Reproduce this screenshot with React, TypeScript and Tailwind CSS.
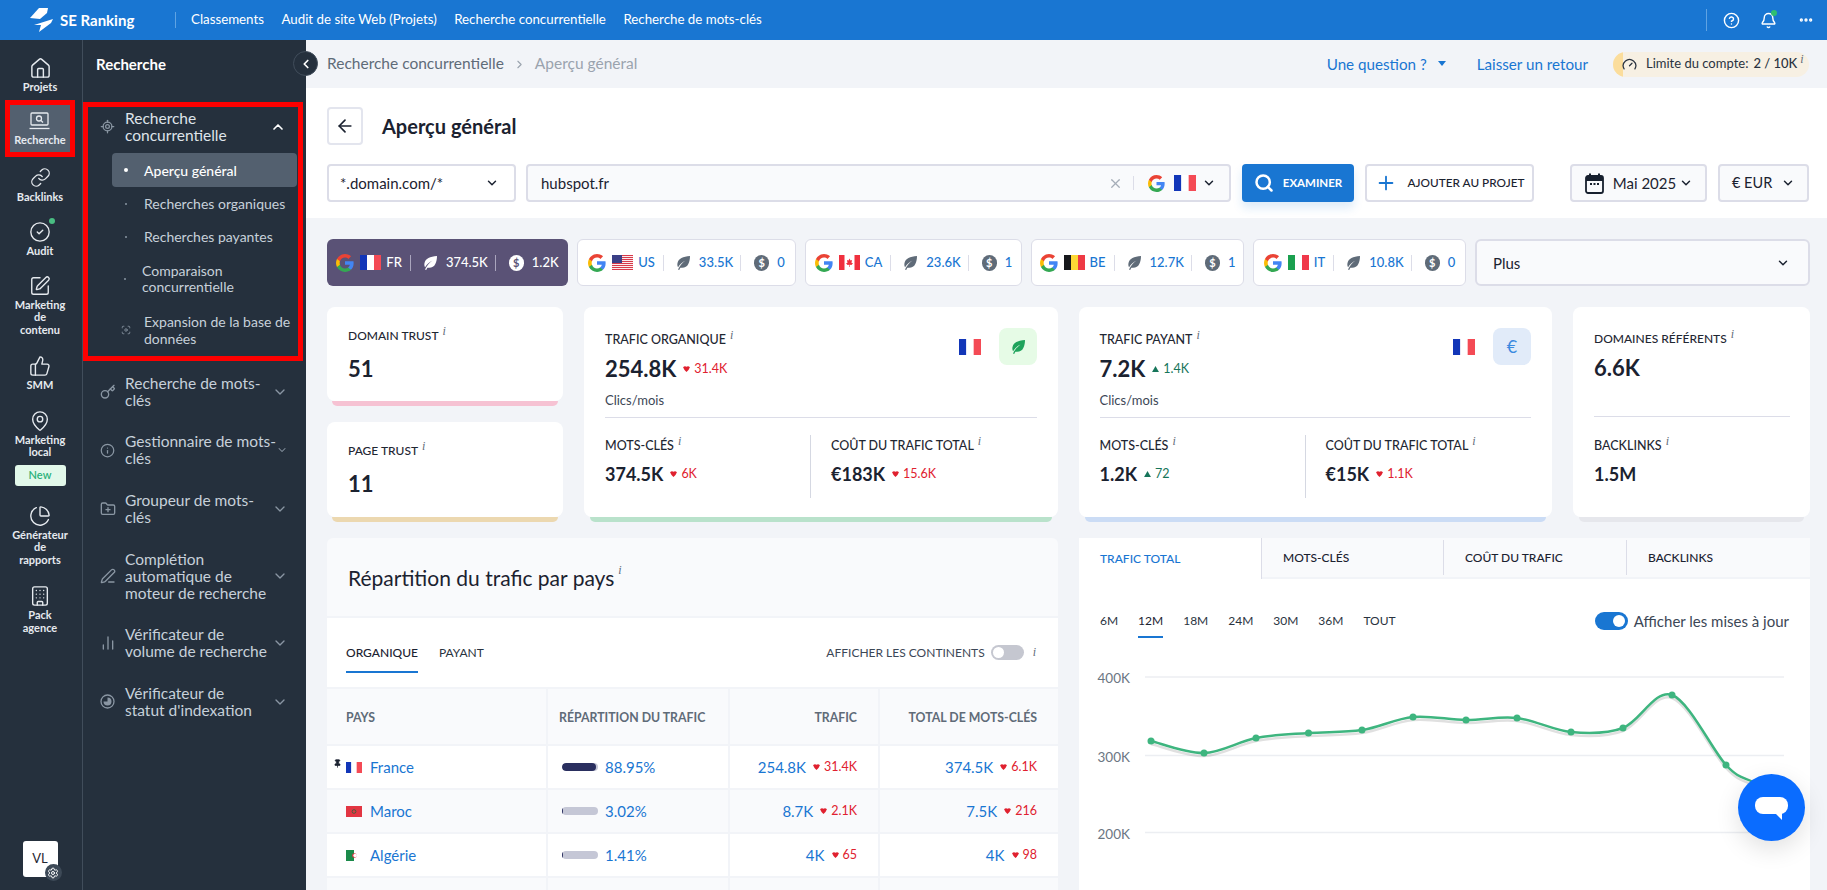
import React from "react";
import {
  Home, Link, CircleCheck, SquarePen, ThumbsUp, MapPin, ChartPie, Building, Settings,
  ChevronDown, ChevronUp, ChevronLeft, ChevronRight, ArrowLeft, Search, Plus, X, CircleHelp, Bell, Ellipsis,
  LocateFixed, Key, CircleAlert, FolderPlus, PenLine, ChartNoAxesColumn, Gauge, Pin, Focus,
} from "lucide-react";

const GoogleG = ({ size = 18 }: { size?: number }) => (
  <svg width={size} height={size} viewBox="1 1 22 22" className="shrink-0">
    <path fill="#4285F4" d="M22.56 12.25c0-.78-.07-1.53-.2-2.25H12v4.26h5.92c-.26 1.37-1.04 2.53-2.21 3.31v2.77h3.57c2.08-1.92 3.28-4.74 3.28-8.09z" />
    <path fill="#34A853" d="M12 23c2.97 0 5.46-.98 7.28-2.66l-3.57-2.77c-.98.66-2.23 1.06-3.71 1.06-2.86 0-5.29-1.93-6.16-4.53H2.18v2.84C3.99 20.53 7.7 23 12 23z" />
    <path fill="#FBBC05" d="M5.84 14.09c-.22-.66-.35-1.36-.35-2.09s.13-1.43.35-2.09V7.07H2.18C1.43 8.55 1 10.22 1 12s.43 3.45 1.18 4.93l2.85-2.22.81-.62z" />
    <path fill="#EA4335" d="M12 5.38c1.62 0 3.06.56 4.21 1.64l3.15-3.15C17.45 2.09 14.97 1 12 1 7.7 1 3.99 3.47 2.18 7.07l3.66 2.84c.87-2.6 3.3-4.53 6.16-4.53z" />
  </svg>
);

const Flag = ({ code, w = 21, h = 15 }: { code: string; w?: number; h?: number }) => (
  <svg width={w} height={h} viewBox="0 0 21 15" preserveAspectRatio="none" className="shrink-0">
    {code === "FR" && (
      <>
        <rect width="7" height="15" fill="#1236b8" />
        <rect x="7" width="7" height="15" fill="#fff" />
        <rect x="14" width="7" height="15" fill="#f44a55" />
      </>
    )}
    {code === "US" && (
      <>
        <rect width="21" height="15" fill="#fff" />
        {[0, 2, 4, 6, 8, 10, 12, 14].map((y) => (
          <rect key={y} y={y} width="21" height="1.1" fill="#d8394a" />
        ))}
        <rect width="10" height="8" fill="#3a3f86" />
      </>
    )}
    {code === "CA" && (
      <>
        <rect width="21" height="15" fill="#fff" />
        <rect width="5.5" height="15" fill="#f0303e" />
        <rect x="15.5" width="5.5" height="15" fill="#f0303e" />
        <path d="M10.5 3.5l1 2 1.5-.5-.5 3 1.5 0-1.5 2-1.7-.3V12h-.6V9.7L8.5 10 7 8h1.500l-.5-3 1.500.5z" fill="#f0303e" />
      </>
    )}
    {code === "BE" && (
      <>
        <rect width="7" height="15" fill="#17181c" />
        <rect x="7" width="7" height="15" fill="#fdd835" />
        <rect x="14" width="7" height="15" fill="#ee3a44" />
      </>
    )}
    {code === "IT" && (
      <>
        <rect width="7" height="15" fill="#1aa04f" />
        <rect x="7" width="7" height="15" fill="#fff" />
        <rect x="14" width="7" height="15" fill="#f0384a" />
      </>
    )}
    {code === "MA" && (
      <>
        <rect width="21" height="15" fill="#e23542" />
        <circle cx="10.5" cy="7.500" r="2.500" fill="none" stroke="#1c6a3a" strokeWidth="1" />
      </>
    )}
    {code === "DZ" && (
      <>
        <rect width="10.500" height="15" fill="#1b8a4a" />
        <rect x="10.500" width="10.500" height="15" fill="#fff" />
        <circle cx="11" cy="7.500" r="3" fill="#e23542" />
        <circle cx="12" cy="7.500" r="2.400" fill="#fff" />
      </>
    )}
  </svg>
);

const Leaf = ({ className = "", size = 16 }: { className?: string; size?: number }) => (
  <svg width={size} height={size} viewBox="0 0 16 16" className={className}>
    <path fill="currentColor" d="M15 1C8 1.500 3.500 3.500 2.500 8c-.4 1.800 0 3.300.6 4.300C5 9 7.500 6.800 10.500 5.500 7.800 7.500 5.200 10 3 14.500l1.200.5c.4-.9.8-1.700 1.200-2.300 3.600.6 6.500-.6 7.900-3.600C14.500 6.500 15 4 15 1z" />
  </svg>
);

const Coin = ({ dark = false }: { dark?: boolean }) => (
  <span className={`flex h-[16px] w-[15px] shrink-0 items-center justify-center rounded-full text-[11px] font-bold leading-none ${dark ? "bg-white text-[#5a5276]" : "bg-[#5f6b78] text-white"}`}>$</span>
);

const Info = ({ className = "" }: { className?: string }) => (
  <span className={`relative -top-[5px] ml-[4px] font-['Liberation_Serif',serif] text-[12px] italic text-[#5f6b78] ${className}`}>i</span>
);

const Delta = ({ v, up = false }: { v: string; up?: boolean }) => (
  <span className={`ml-[7px] inline-flex items-center gap-[4px] text-[12.5px] font-normal ${up ? "text-[#16755a]" : "text-[#e0212f]"}`}>
    <svg width="7" height="6" viewBox="0 0 8 7">
      {up ? <path d="M4 0l4 7H0z" fill="currentColor" /> : <path d="M0 1.500Q2 -.5 4 1Q6 -.5 8 1.500Q7 4.500 4 7Q1 4.500 0 1.500z" fill="currentColor" />}
    </svg>
    {v}
  </span>
);

function RailItem({ icon, label, dot }: { icon: React.ReactNode; label: string[]; dot?: boolean }) {
  return (
    <div className="relative flex flex-col items-center text-[11px] font-bold leading-[12.5px] text-[#e6eaef]">
      <span className="relative mb-[2px] flex h-[22px] items-center justify-center">
        {icon}
        {dot && <span className="absolute -right-[4px] top-[-3px] h-[6px] w-[6px] rounded-full bg-[#49bd82]" />}
      </span>
      {label.map((l) => (
        <span key={l}>{l}</span>
      ))}
    </div>
  );
}

function NavGroup({ icon, lines, h }: { icon: React.ReactNode; lines: string[]; h: number }) {
  return (
    <div className="flex items-center pl-[17px] pr-[18px] text-[#c7d0da]" style={{ height: h }}>
      <span className="flex w-[25px] shrink-0 text-[#8a96a3]">{icon}</span>
      <span className="flex-1 whitespace-nowrap text-[15.5px] leading-[17px]">
        {lines.map((l) => (
          <div key={l}>{l}</div>
        ))}
      </span>
      <ChevronDown size={16} className="text-[#8a96a3]" />
    </div>
  );
}

const topLinks = ["Classements", "Audit de site Web (Projets)", "Recherche concurrentielle", "Recherche de mots-clés"];

const chips = [
  { g: "FR", a: "374.5K", b: "1.2K", w: "w-[241px]", active: true },
  { g: "US", a: "33.5K", b: "0", w: "w-[219px]" },
  { g: "CA", a: "23.6K", b: "1", w: "w-[217px]" },
  { g: "BE", a: "12.7K", b: "1", w: "w-[213px]" },
  { g: "IT", a: "10.8K", b: "0", w: "w-[213px]" },
];

const rows = [
  { flag: "FR", name: "France", pct: "88.95%", fill: "w-[94%]", t: "254.8K", td: "31.4K", k: "374.5K", kd: "6.1K", pin: true },
  { flag: "MA", name: "Maroc", pct: "3.02%", fill: "w-[4%]", t: "8.7K", td: "2.1K", k: "7.5K", kd: "216" },
  { flag: "DZ", name: "Algérie", pct: "1.41%", fill: "w-[3%]", t: "4K", td: "65", k: "4K", kd: "98" },
];

// x is from the left of the chart panel, y from the top of the svg
const points: [number, number][] = [
  [72, 102], [125, 114], [177, 99], [229.5, 94], [283, 91], [334, 78], [387, 81], [438, 79],
  [492, 93], [544, 89], [593, 56], [647, 126], [674, 143], [699, 156],
];

function smoothPath(p: [number, number][]) {
  let d = `M${p[0][0]} ${p[0][1]}`;
  for (let i = 0; i < p.length - 1; i++) {
    const p0 = p[i - 1] || p[i];
    const p1 = p[i];
    const p2 = p[i + 1];
    const p3 = p[i + 2] || p2;
    const c1x = p1[0] + (p2[0] - p0[0]) / 6;
    const c1y = p1[1] + (p2[1] - p0[1]) / 6;
    const c2x = p2[0] - (p3[0] - p1[0]) / 6;
    const c2y = p2[1] - (p3[1] - p1[1]) / 6;
    d += ` C${c1x} ${c1y} ${c2x} ${c2y} ${p2[0]} ${p2[1]}`;
  }
  return d;
}

function SubMetric({ title, value, delta, up }: { title: string; value: string; delta?: string; up?: boolean }) {
  return (
    <div>
      <div className="text-[12.5px] font-medium leading-[16px] text-[#1f2733]">{title}<Info /></div>
      <div className="mt-[8px] flex items-center text-[18px] font-bold leading-[24px] text-[#1b2230]">
        {value}
        {delta && <Delta v={delta} up={up} />}
      </div>
    </div>
  );
}

function TrafficCard({ title, value, delta, up, badge, strip, kw, kwd, kwUp, cost, costd }: any) {
  return (
    <div className="flex-1">
      <div className="relative h-[210px] rounded-[8px] bg-white px-[21px] pt-[25px]">
        <div className="flex justify-between">
          <div>
            <div className="text-[12.5px] font-medium leading-[16px] text-[#1f2733]">{title}<Info /></div>
            <div className="mt-[6px] flex items-center text-[22px] font-bold leading-[30px] text-[#1b2230]">
              {value}
              <Delta v={delta} up={up} />
            </div>
            <div className="mt-[8px] text-[13px] leading-[16px] text-[#3c4756]">Clics/mois</div>
          </div>
          <div className="-mt-[4px] flex items-start gap-[18px]">
            <span className="mt-[11px]"><Flag code="FR" w={22} h={16} /></span>
            {badge}
          </div>
        </div>
        <div className="mt-[9px] h-px bg-[#dcdde8]" />
        <div className="mt-[17px] flex h-[63px]">
          <div className="w-[206px] border-r border-[#d5d8e2] pt-[3px]">
            <SubMetric title="MOTS-CLÉS" value={kw} delta={kwd} up={kwUp} />
          </div>
          <div className="pl-[20px] pt-[3px]">
            <SubMetric title="COÛT DU TRAFIC TOTAL" value={cost} delta={costd} />
          </div>
        </div>
      </div>
      <div className={`mx-[6px] h-[5px] rounded-b-[5px] ${strip}`} />
    </div>
  );
}

function TrustCard({ title, value, strip, h }: { title: string; value: string; strip: string; h: string }) {
  return (
    <div>
      <div className={`rounded-[8px] bg-white pl-[21px] pt-[21px] ${h}`}>
        <div className="text-[12px] font-medium leading-[16px] text-[#1f2733]">{title}<Info /></div>
        <div className="mt-[11px] text-[22px] font-bold leading-[28px] text-[#1b2230]">{value}</div>
      </div>
      <div className={`mx-[5px] h-[5px] rounded-b-[5px] ${strip}`} />
    </div>
  );
}

export default function App() {
  return (
    <div className="flex h-[890px] w-full flex-col overflow-hidden bg-[#f2f4f8] [font-family:Lato,sans-serif]">
      {/* TOP BAR */}
      <header className="flex h-[40px] shrink-0 items-center bg-[#1976d2] text-white">
        <div className="flex w-[175px] items-center pl-[30px]">
          <svg width="23" height="24" viewBox="0 0 23 24" className="shrink-0">
            <path fill="#fff" d="M9 0h9l-1 5-7 6-10-1z" />
            <path fill="#fff" d="M23 11L4 17h7l-2 7 12-9z" />
          </svg>
          <span className="ml-[7px] text-[15px] font-bold">SE Ranking</span>
        </div>
        <div className="h-[16px] w-px bg-[#5fa3e3]" />
        <nav className="ml-[15px] flex gap-[17.5px] text-[13.3px]">
          {topLinks.map((l) => (
            <span key={l}>{l}</span>
          ))}
        </nav>
        <div className="ml-auto flex items-center pr-[13px]">
          <div className="mr-[16px] h-[22px] w-px bg-[#5fa3e3]" />
          <CircleHelp size={17} className="mr-[20px]" />
          <span className="relative mr-[21px]">
            <Bell size={17} />
            <span className="absolute right-[0px] top-[-2px] h-[6px] w-[6px] rounded-full bg-[#2fbf71]" />
          </span>
          <Ellipsis size={16} strokeWidth={3} />
        </div>
      </header>

      <div className="flex min-h-0 flex-1">
        {/* ICON RAIL */}
        <aside className="flex w-[83px] shrink-0 flex-col items-center border-r border-[#414d5b] bg-[#25303d] pr-[2px] pt-[17px]">
          <RailItem icon={<Home size={23} strokeWidth={1.5} />} label={["Projets"]} />
          <div className="mt-[6px] flex h-[57px] w-[70px] shrink-0 items-center justify-center border-[5px] border-[#fe0000] bg-[#53606f]">
            <RailItem
              label={["Recherche"]}
              icon={
                <svg width="21" height="20" viewBox="0 0 21 20" fill="none" stroke="currentColor" strokeWidth="1.300">
                  <rect x="2" y="2" width="17" height="12" rx="1" />
                  <path d="M.5 17.500h20" />
                  <circle cx="10" cy="7.500" r="2.500" />
                  <path d="M12 9.500l2 2" />
                </svg>
              }
            />
          </div>
          <div className="mt-[10px]"><RailItem icon={<Link size={21} strokeWidth={1.5} />} label={["Backlinks"]} /></div>
          <div className="mt-[18px]"><RailItem dot icon={<CircleCheck size={22} strokeWidth={1.5} />} label={["Audit"]} /></div>
          <div className="mt-[17px]"><RailItem icon={<SquarePen size={22} strokeWidth={1.5} />} label={["Marketing", "de", "contenu"]} /></div>
          <div className="mt-[19px]"><RailItem icon={<ThumbsUp size={22} strokeWidth={1.5} />} label={["SMM"]} /></div>
          <div className="mt-[18px]"><RailItem icon={<MapPin size={22} strokeWidth={1.5} />} label={["Marketing", "local"]} /></div>
          <span className="mt-[6px] flex h-[21px] w-[51px] shrink-0 items-center justify-center rounded-[3px] bg-[#e2f8ea] text-[11px] font-semibold text-[#2cb27a]">New</span>
          <div className="mt-[19px]"><RailItem icon={<ChartPie size={22} strokeWidth={1.5} />} label={["Générateur", "de", "rapports"]} /></div>
          <div className="mt-[19px]"><RailItem icon={<Building size={22} strokeWidth={1.5} />} label={["Pack", "agence"]} /></div>
          <div className="relative mt-auto mb-[13px] flex h-[36px] w-[35px] shrink-0 items-center justify-center rounded-[3px] bg-white text-[13px] text-[#1f2733]">
            VL
            <span className="absolute -bottom-[4px] -right-[4px] flex h-[17px] w-[17px] items-center justify-center rounded-full bg-[#3d4957] text-white">
              <Settings size={12} />
            </span>
          </div>
        </aside>

        {/* SECOND PANEL */}
        <aside className="relative w-[223px] shrink-0 bg-[#25303d]">
          <div className="flex h-[46px] items-center pl-[13px] pt-[2px] text-[15px] font-bold text-white">Recherche</div>
          <span className="absolute -right-[12px] top-[11px] z-10 flex h-[25px] w-[25px] items-center justify-center rounded-full border border-[#414d5b] bg-[#25303d] text-white">
            <ChevronLeft size={14} strokeWidth={3} />
          </span>
          <div className="ml-[0px] mr-[3px] mt-[16px] h-[259px] border-[5px] border-[#fe0000]">
            <div className="flex h-[39px] items-center pl-[12px] pr-[12px] text-[#dfe4ea]">
              <LocateFixed size={15} className="mr-[10px] shrink-0 text-[#8a96a3]" />
              <span className="flex-1 text-[15.5px] leading-[17px]">Recherche<br />concurrentielle</span>
              <ChevronUp size={16} strokeWidth={2.500} className="text-white" />
            </div>
            <div className="ml-[24px] mr-[1px] mt-[7px] flex h-[34px] items-center rounded-[4px] bg-[#53606f] text-[14px] font-medium text-white">
              <span className="ml-[12px] mr-[16px] h-[4px] w-[4px] rounded-full bg-white" />
              Aperçu général
            </div>
            {["Recherches organiques", "Recherches payantes"].map((t) => (
              <div key={t} className="ml-[24px] flex h-[33px] items-center text-[14px] text-[#c7d0da]">
                <span className="ml-[13px] mr-[17px] h-[2px] w-[2px] rounded-full bg-[#8a96a3]" />
                {t}
              </div>
            ))}
            <div className="ml-[24px] flex h-[52px] items-center text-[14px] leading-[16px] text-[#c7d0da]">
              <span className="ml-[12px] mr-[16px] h-[2px] w-[2px] rounded-full bg-[#8a96a3]" />
              <span>Comparaison<br />concurrentielle</span>
            </div>
            <div className="ml-[24px] flex h-[49px] items-center text-[14px] leading-[17px] text-[#c7d0da]">
              <Focus size={10} className="ml-[9px] mr-[13px] shrink-0 text-[#8a96a3]" />
              <span>Expansion de la base de<br />données</span>
            </div>
          </div>
          <div className="mt-[1.5px]">
            <NavGroup h={58} icon={<Key size={16} />} lines={["Recherche de mots-", "clés"]} />
            <NavGroup h={59} icon={<CircleAlert size={15} className="rotate-180" />} lines={["Gestionnaire de mots-", "clés"]} />
            <NavGroup h={58} icon={<FolderPlus size={16} />} lines={["Groupeur de mots-", "clés"]} />
            <NavGroup h={77} icon={<PenLine size={16} />} lines={["Complétion", "automatique de", "moteur de recherche"]} />
            <NavGroup h={57} icon={<ChartNoAxesColumn size={16} />} lines={["Vérificateur de", "volume de recherche"]} />
            <NavGroup
              h={60}
              lines={["Vérificateur de", "statut d'indexation"]}
              icon={
                <svg width="15" height="15" viewBox="0 0 15 15">
                  <circle cx="7.500" cy="7.500" r="6.500" fill="none" stroke="currentColor" strokeWidth="1.300" />
                  <path d="M7.500 3.500A4 4 0 1 1 3.500 7.500H7.500z" fill="currentColor" />
                </svg>
              }
            />
          </div>
        </aside>

        {/* MAIN */}
        <main className="min-w-0 flex-1">
          <div className="flex h-[48px] items-center pl-[21px] pr-[18px] text-[15.2px]">
            <span className="text-[15.5px] text-[#5f6b78]">Recherche concurrentielle</span>
            <ChevronRight size={13} className="mx-[9px] text-[#9aa3ae]" />
            <span className="text-[15.5px] text-[#9aa3ae]">Aperçu général</span>
            <span className="ml-auto flex items-center text-[#1976d2]">
              Une question ?
              <svg width="8" height="5" viewBox="0 0 8 5" className="ml-[11px]"><path d="M0 0h8L4 5z" fill="currentColor" /></svg>
            </span>
            <span className="ml-[31px] text-[#1976d2]">Laisser un retour</span>
            <span className="relative ml-[25px] flex h-[25px] w-[196px] items-center overflow-hidden rounded-full bg-[#f7f0e3] pl-[9px] text-[13px] text-[#2a3340]">
              <span className="absolute left-0 top-0 h-full w-[10px] bg-[#fbdd9c]" />
              <Gauge size={15} className="relative mr-[9px]" />
              <span>Limite du compte:</span>
              <span className="ml-[5px] font-medium">2 / 10K</span>
              <Info className="!ml-[3px]" />
            </span>
          </div>

          <div className="h-[130px] bg-white pl-[21px] pr-[17px]">
            <div className="flex items-center pt-[19px]">
              <span className="flex h-[38px] w-[36px] items-center justify-center rounded-[4px] border-2 border-[#e3e5ee] text-[#1b2230]">
                <ArrowLeft size={20} />
              </span>
              <h1 className="ml-[19px] text-[20px] font-bold text-[#1b2230]">Aperçu général</h1>
            </div>
            <div className="mt-[19px] flex h-[38px] text-[15px]">
              <div className="flex w-[189px] items-center justify-between rounded-[4px] border-2 border-[#dcdde8] pl-[11px] pr-[15px] text-[#1b2230]">
                *.domain.com/*
                <ChevronDown size={14} strokeWidth={2.500} />
              </div>
              <div className="ml-[10px] flex w-[705px] items-center rounded-[4px] border-2 border-[#dcdde8] bg-[#f9fafc] pl-[13px] pr-[13px] text-[#1b2230]">
                hubspot.fr
                <X size={15} className="ml-auto text-[#a5adb8]" />
                <span className="ml-[10px] h-[14px] w-px bg-[#dcdde8]" />
                <span className="ml-[14px]"><GoogleG size={17} /></span>
                <span className="ml-[9px]"><Flag code="FR" w={22} h={16} /></span>
                <ChevronDown size={14} strokeWidth={2.500} className="ml-[6px]" />
              </div>
              <div className="ml-[11px] flex w-[112px] items-center justify-center gap-[9px] rounded-[4px] bg-[#1976d2] text-[11.5px] font-bold text-white shadow-[0_6px_10px_rgba(25,118,210,0.15)]">
                <Search size={20} strokeWidth={3} />
                EXAMINER
              </div>
              <div className="ml-[11px] flex w-[169px] items-center justify-center gap-[11px] rounded-[4px] border-2 border-[#dcdde8] text-[11.8px] font-medium text-[#1b2230]">
                <Plus size={22} className="text-[#1976d2]" />
                AJOUTER AU PROJET
              </div>
              <div className="ml-[36px] flex w-[137px] items-center justify-between rounded-[4px] border-2 border-[#dcdde8] bg-[#f9fafc] pl-[13px] pr-[12px] text-[#1b2230]">
                <svg width="19" height="21" viewBox="0 0 19 21" className="shrink-0">
                  <rect x="1" y="3" width="17" height="17" rx="2" fill="none" stroke="#17202e" strokeWidth="1.800" />
                  <rect x="1" y="3" width="17" height="5" fill="#17202e" />
                  <rect x="4" y="0.500" width="2" height="4" fill="#17202e" />
                  <rect x="13" y="0.500" width="2" height="4" fill="#17202e" />
                  <path d="M5 11h2M8.500 11h2M12 11h2" stroke="#17202e" strokeWidth="1.800" />
                </svg>
                <span className="ml-[6px]">Mai 2025</span>
                <ChevronDown size={14} strokeWidth={2.500} />
              </div>
              <div className="ml-[11px] flex w-[91px] items-center justify-between rounded-[4px] border-2 border-[#dcdde8] bg-[#f9fafc] pl-[12px] pr-[12px] text-[14.5px] text-[#1b2230]">
                € EUR
                <ChevronDown size={14} strokeWidth={2.500} />
              </div>
            </div>
          </div>

          <div className="pl-[21px] pr-[17px] pt-[21px]">
            {/* DATABASE CHIPS */}
            <div className="flex h-[47px] gap-[9px]">
              {chips.map((c) => (
                <div
                  key={c.g}
                  className={`flex items-center justify-center rounded-[6px] text-[13px] font-medium ${c.w} ${c.active ? "bg-[#5a5276] text-white" : "border border-[#dcdde8] bg-white text-[#1976d2]"}`}
                >
                  <GoogleG />
                  <span className="ml-[6px]"><Flag code={c.g} /></span>
                  <span className="ml-[5px]">{c.g}</span>
                  <span className={`ml-[8px] h-[16px] w-px ${c.active ? "bg-[#aaa5bd]" : "bg-[#dcdde8]"}`} />
                  <Leaf className={`ml-[11px] ${c.active ? "text-white" : "text-[#5f6b78]"}`} />
                  <span className="ml-[8px]">{c.a}</span>
                  <span className={`ml-[7px] h-[16px] w-px ${c.active ? "bg-[#aaa5bd]" : "bg-[#dcdde8]"}`} />
                  <span className="ml-[13px]"><Coin dark={c.active} /></span>
                  <span className="ml-[8px]">{c.b}</span>
                </div>
              ))}
              <div className="flex flex-1 items-center justify-between rounded-[6px] border-2 border-[#dcdde8] bg-[#f9fafc] pl-[16px] pr-[18px] pt-[1px] text-[15px] text-[#1b2230]">
                Plus
                <ChevronDown size={14} strokeWidth={2.500} />
              </div>
            </div>

            {/* METRICS */}
            <div className="mt-[21px] flex gap-[21px]">
              <div className="flex w-[236px] shrink-0 flex-col gap-[16px]">
                <TrustCard title="DOMAIN TRUST" value="51" strip="bg-[#f6c2d3]" h="h-[94px]" />
                <TrustCard title="PAGE TRUST" value="11" strip="bg-[#ecd8b0]" h="h-[95px]" />
              </div>
              <TrafficCard
                title="TRAFIC ORGANIQUE" value="254.8K" delta="31.4K" strip="bg-[#b9e2cb]"
                kw="374.5K" kwd="6K" cost="€183K" costd="15.6K"
                badge={<span className="flex h-[37px] w-[38px] items-center justify-center rounded-[8px] bg-[#e6fbe6] text-[#1fa35c]"><Leaf /></span>}
              />
              <TrafficCard
                title="TRAFIC PAYANT" value="7.2K" delta="1.4K" up strip="bg-[#cbdcf5]"
                kw="1.2K" kwd="72" kwUp cost="€15K" costd="1.1K"
                badge={<span className="flex h-[37px] w-[38px] items-center justify-center rounded-[8px] bg-[#e1ebf9] text-[18px] text-[#3c8ae0]">€</span>}
              />
              <div className="w-[237px] shrink-0">
                <div className="h-[210px] rounded-[8px] bg-white px-[21px] pt-[24px]">
                  <div className="text-[12px] font-medium leading-[16px] text-[#1f2733]">DOMAINES RÉFÉRENTS<Info /></div>
                  <div className="mt-[6px] text-[22px] font-bold leading-[30px] text-[#1b2230]">6.6K</div>
                  <div className="mr-[-1px] mt-[33px] h-px bg-[#dcdde8]" />
                  <div className="mt-[21px]"><SubMetric title="BACKLINKS" value="1.5M" /></div>
                </div>
                <div className="mx-[6px] h-[5px] rounded-b-[5px] bg-[#e6e7ec]" />
              </div>
            </div>

            {/* BOTTOM PANELS */}
            <div className="mt-[16px] flex gap-[21px]">
              <section className="w-[731px] shrink-0 overflow-hidden rounded-t-[6px] bg-[#f2f4f8]">
                <div className="flex h-[78px] items-center bg-[#f9fafc] pl-[21px] pt-[1px] text-[21px] text-[#1b2230]">
                  Répartition du trafic par pays<Info className="!top-[-8px]" />
                </div>
                <div className="mt-[2px] flex h-[69px] items-center bg-white pl-[19px] pr-[22px] text-[12px]">
                  <span className="relative font-medium text-[#1b2230]">
                    ORGANIQUE
                    <span className="absolute -bottom-[11px] left-0 h-[2px] w-full bg-[#1976d2]" />
                  </span>
                  <span className="ml-[21px] text-[#2a3340]">PAYANT</span>
                  <span className="ml-auto text-[#3c4756]">AFFICHER LES CONTINENTS</span>
                  <span className="ml-[6px] flex h-[15px] w-[33px] items-center rounded-full bg-[#c5c7d0] pl-[2px]">
                    <span className="h-[11px] w-[11px] rounded-full bg-white" />
                  </span>
                  <Info className="!top-[-1px] !ml-[9px]" />
                </div>
                <div className="mt-[2px] grid grid-cols-[219px_180px_148px_178px] gap-[2px] text-[15px]">
                  <div className="flex h-[55px] items-center bg-[#f9fafc] pl-[19px] pt-[3px] text-[12.3px] font-bold text-[#5f6b78]">PAYS</div>
                  <div className="flex h-[55px] items-center bg-[#f9fafc] pl-[11px] pt-[3px] text-[12.3px] font-bold text-[#5f6b78]">RÉPARTITION DU TRAFIC</div>
                  <div className="flex h-[55px] items-center justify-end bg-[#f9fafc] pr-[21px] pt-[3px] text-[12.3px] font-bold text-[#5f6b78]">TRAFIC</div>
                  <div className="flex h-[55px] items-center justify-end bg-[#f9fafc] pr-[21px] pt-[3px] text-[12.3px] font-bold text-[#5f6b78]">TOTAL DE MOTS-CLÉS</div>
                  {rows.map((r, i) => {
                    const bg = i % 2 ? "bg-[#f9fafc]" : "bg-white";
                    return (
                      <React.Fragment key={r.name}>
                        <div className={`relative flex h-[42px] items-center pl-[19px] text-[#1976d2] ${bg}`}>
                          {r.pin && <Pin size={9} fill="#1b2230" className="absolute left-[6px] top-[13px] text-[#1b2230]" />}
                          <Flag code={r.flag} w={16} h={11} />
                          <span className="ml-[8px]">{r.name}</span>
                        </div>
                        <div className={`flex h-[42px] items-center pl-[14px] text-[#1976d2] ${bg}`}>
                          <span className="h-[8px] w-[36px] overflow-hidden rounded-full bg-[#c5c7d6]">
                            <span className={`block h-full rounded-full bg-[#2a2f5f] ${r.fill}`} />
                          </span>
                          <span className="ml-[7px]">{r.pct}</span>
                        </div>
                        <div className={`flex h-[42px] items-center justify-end pr-[21px] text-[#1976d2] ${bg}`}>
                          {r.t}
                          <Delta v={r.td} />
                        </div>
                        <div className={`flex h-[42px] items-center justify-end pr-[21px] text-[#1976d2] ${bg}`}>
                          {r.k}
                          <Delta v={r.kd} />
                        </div>
                      </React.Fragment>
                    );
                  })}
                  <div className="h-[20px] bg-[#f9fafc]" />
                  <div className="h-[20px] bg-[#f9fafc]" />
                  <div className="h-[20px] bg-[#f9fafc]" />
                  <div className="h-[20px] bg-[#f9fafc]" />
                </div>
              </section>

              <section className="min-w-0 flex-1 bg-white">
                <div className="flex h-[41px] text-[12px] font-medium">
                  <div className="flex w-[183px] items-center border-r border-[#dcdde8] pl-[21px] text-[#1976d2]">TRAFIC TOTAL</div>
                  <div className="flex flex-1 items-center border-b-2 border-[#f2f4f8] bg-[#f9fafc] text-[#1b2230]">
                    <span className="flex h-[35px] w-[182px] items-center border-r border-[#dcdde8] pl-[21px]">MOTS-CLÉS</span>
                    <span className="flex h-[35px] w-[183px] items-center border-r border-[#dcdde8] pl-[21px]">COÛT DU TRAFIC</span>
                    <span className="pl-[21px]">BACKLINKS</span>
                  </div>
                </div>
                <div className="flex h-[60px] items-start pl-[21px] pr-[21px] pt-[33px] text-[12px] text-[#2a3340]">
                  {["6M", "12M", "18M", "24M", "30M", "36M", "TOUT"].map((m) => (
                    <span key={m} className={`relative mr-[20px] leading-[18px] ${m === "12M" ? "text-[#1b2230]" : ""}`}>
                      {m}
                      {m === "12M" && <span className="absolute -bottom-[8px] left-0 h-[2px] w-full bg-[#1976d2]" />}
                    </span>
                  ))}
                  <span className="ml-auto -mt-[2px] flex items-center text-[15px] text-[#3c4756]">
                    <span className="mr-[6px] flex h-[18px] w-[33px] items-center justify-end rounded-full bg-[#1976d2] pr-[3px]">
                      <span className="h-[12px] w-[12px] rounded-full bg-white" />
                    </span>
                    Afficher les mises à jour
                  </span>
                </div>
                <svg width="731" height="250" viewBox="0 0 731 250" className="block">
                  {[{ y: 38, t: "400K" }, { y: 116.5, t: "300K" }, { y: 193.5, t: "200K" }].map((g) => (
                    <g key={g.t}>
                      <line x1="66" x2="705" y1={g.y} y2={g.y} stroke="#eceef2" strokeWidth="1.500" />
                      <text x="18.5" y={g.y + 6} fontSize="13.500" fill="#6b7683">{g.t}</text>
                    </g>
                  ))}
                  <path d={smoothPath(points)} fill="none" stroke="#000" strokeOpacity="0.12" strokeWidth="2.500" transform="translate(0 3)" />
                  <path d={smoothPath(points)} fill="none" stroke="#3eb57f" strokeWidth="2.500" />
                  {points.slice(0, 12).map(([x, y]) => (
                    <circle key={x} cx={x} cy={y} r="3.500" fill="#3eb57f" />
                  ))}
                </svg>
              </section>
            </div>
          </div>
        </main>
      </div>

      {/* CHAT BUTTON */}
      <div className="fixed left-[1738px] top-[774px] flex h-[67px] w-[67px] items-center justify-center rounded-full bg-[#0a6cff] shadow-[0_8px_24px_rgba(0,0,0,0.12)]">
        <span className="relative mt-[-5px] h-[17px] w-[33px] rounded-[8px] bg-white">
          <svg width="8" height="8" viewBox="0 0 8 8" className="absolute -bottom-[7px] right-[5px]"><path d="M0 0h7v7z" fill="#fff" /></svg>
        </span>
      </div>
    </div>
  );
}
